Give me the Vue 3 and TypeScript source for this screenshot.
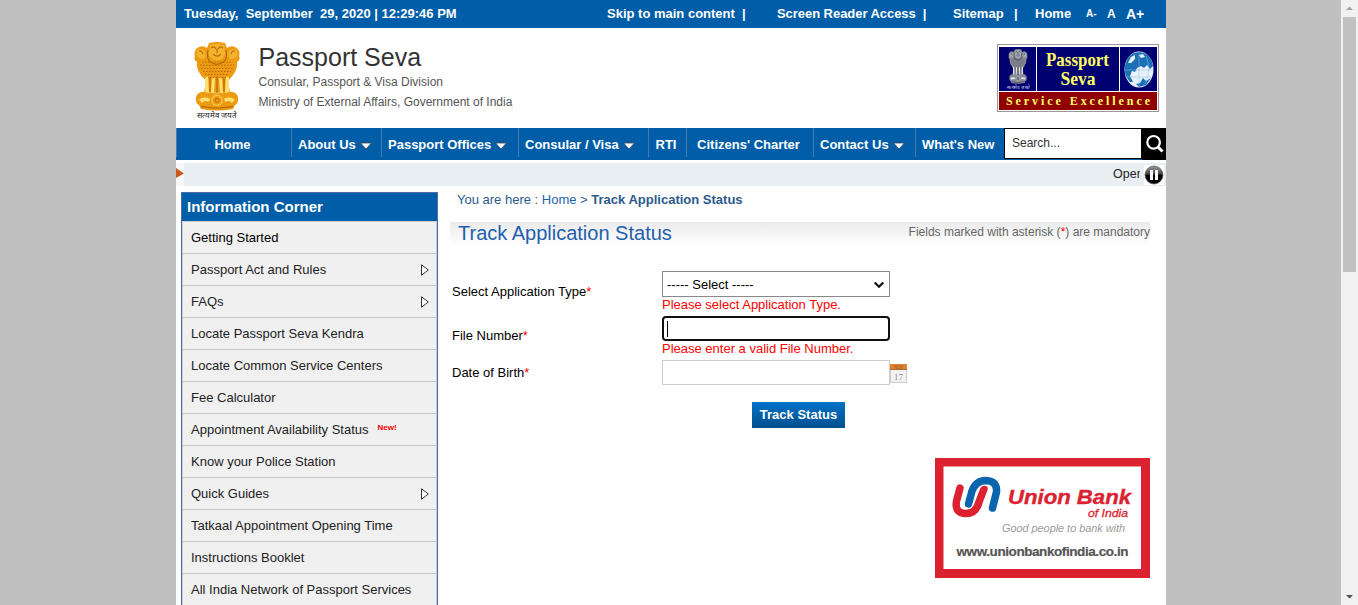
<script setup lang="ts">
import { ref } from 'vue'

interface NavItem { label: string; width: number; menu?: boolean; center?: boolean }
interface SideItem { label: string; sub?: boolean; isNew?: boolean; active?: boolean }

const nav: NavItem[] = [
  { label: 'Home', width: 115, center: true },
  { label: 'About Us', width: 90, menu: true },
  { label: 'Passport Offices', width: 137, menu: true },
  { label: 'Consular / Visa', width: 130, menu: true },
  { label: 'RTI', width: 38, center: true },
  { label: "Citizens' Charter", width: 127, center: true },
  { label: 'Contact Us', width: 102, menu: true },
  { label: "What's New", width: 89 },
]

const side: SideItem[] = [
  { label: 'Getting Started', active: true },
  { label: 'Passport Act and Rules', sub: true },
  { label: 'FAQs', sub: true },
  { label: 'Locate Passport Seva Kendra' },
  { label: 'Locate Common Service Centers' },
  { label: 'Fee Calculator' },
  { label: 'Appointment Availability Status', isNew: true },
  { label: 'Know your Police Station' },
  { label: 'Quick Guides', sub: true },
  { label: 'Tatkaal Appointment Opening Time' },
  { label: 'Instructions Booklet' },
  { label: 'All India Network of Passport Services' },
]

const dob = ref('')
</script>

<template>
  <div class="screen">
    <svg class="defs" width="0" height="0" aria-hidden="true">
      <symbol id="emblem" viewBox="0 0 48 68" preserveAspectRatio="none">
        <path class="e1" d="M16 1 Q24 -1 32 1 L34 6 Q38 3 42 5 Q48 8 46 14 Q48 17 44 20 Q45 27 39 34 L35 38 L37 50 H11 L13 38 L9 34 Q3 27 4 20 Q0 17 2 14 Q0 8 6 5 Q10 3 14 6 Z" />
        <path class="e2" d="M17 3 Q24 1 31 3 L32 12 Q30 18 24 18 Q18 18 16 12 Z M4 8 Q9 5 13 10 L12 16 Q7 18 4 14 Z M44 8 Q39 5 35 10 L36 16 Q41 18 44 14 Z" />
        <path class="l1" d="M18 6 Q21 3 23 7 M30 6 Q27 3 25 7 M20 12 Q24 16 28 12 M24 7 V11 M6 9 Q9 8 10 12 M42 9 Q39 8 38 12 M15 8 Q13 17 18 20 Q24 24 30 20 Q35 17 33 8" />
        <path class="dots" d="M9 20 H39 M7 23 H41 M8 26 H40 M10 29 H38 M12 32 H36 M14 35 H34" />
        <path class="e3" d="M12 35 L15 34 L16 50 H12 Z M19 36 L22 35 L21 50 H18 Z M26 35 L29 36 L30 50 H27 Z M33 34 L36 35 L36 50 H32 Z" />
        <path class="l1" d="M17 35 L17 49 M24 34 L24 50 M31 35 L31 49" />
        <path class="e1" d="M9 49 Q24 52 39 49 Q46 51 45 57 Q45 61 42 62 L40 66 Q24 69 8 66 L6 62 Q3 61 3 57 Q2 51 9 49 Z" />
        <circle class="ring" cx="24" cy="57.5" r="5" />
        <circle class="hub" cx="24" cy="57.5" r="2" />
        <path class="e3" d="M6 57 Q10 53 17 56 L16 59 Q11 57 9 60 Z M42 57 Q38 53 31 56 L32 59 Q37 57 39 60 Z" />
        <path class="l1" d="M8 63.500 Q24 67 40 63.500" />
      </symbol>
    </svg>

    <div class="page">
      <div class="topbar">
        <span class="date">Tuesday,&nbsp; September&nbsp; 29, 2020 | 12:29:46 PM</span>
        <span class="t-skip">Skip to main content&nbsp; |</span>
        <span class="t-reader">Screen Reader Access&nbsp; |</span>
        <span class="t-map">Sitemap</span>
        <span class="t-bar">|</span>
        <span class="t-home">Home</span>
        <span class="t-small">A-</span>
        <span class="t-mid">A</span>
        <span class="t-big">A+</span>
      </div>

      <header class="head">
        <div class="crest">
          <svg class="gold" width="48" height="69"><use href="#emblem" /></svg>
          <span class="motto">सत्यमेव जयते</span>
        </div>
        <div class="title">
          <h1>Passport Seva</h1>
          <p class="p1">Consular, Passport &amp; Visa Division</p>
          <p class="p2">Ministry of External Affairs, Government of India</p>
        </div>
        <svg class="logo" width="162" height="69" viewBox="0 0 162 69">
          <rect x=".5" y=".5" width="161" height="67" fill="#fff" stroke="#999" />
          <rect x="2" y="3" width="37" height="44" fill="#000070" />
          <rect x="40" y="3" width="82" height="44" fill="#000070" />
          <rect x="123" y="3" width="37" height="44" fill="#000070" />
          <rect x="2" y="48" width="158" height="18" fill="#900000" />
          <svg class="silver" x="11" y="5" width="20" height="35"><use href="#emblem" /></svg>
          <text x="10" y="45" font-size="5" textLength="23" lengthAdjust="spacingAndGlyphs" fill="#dde">सत्यमेव जयते</text>
          <g class="serif" fill="#ffff66" font-weight="bold">
            <text x="49" y="22" font-size="19.500" textLength="63" lengthAdjust="spacingAndGlyphs">Passport</text>
            <text x="63.500" y="41" font-size="19.500" textLength="35" lengthAdjust="spacingAndGlyphs">Seva</text>
            <text x="9" y="61" font-size="12" textLength="144">Service Excellence</text>
          </g>
          <ellipse cx="142" cy="25.500" rx="14.500" ry="18" fill="#e8f2fa" />
          <path fill="#1b6fb5" d="M128 22 Q130 9 142 8 Q154 9 156 22 L153 25 L150 21 L147 24 L144 22 L140 24 L138 28 L135 27 L133 32 L136 38 L133 38 Q126 30 128 22 Z M146 34 L149 37 L154 34 L149 41 L142 43 L139 40 L143 39 Z" />
          <path fill="#e8f2fa" d="M134 13 L138 11 L138 15 L134 19 L131 19 Z M142 11 L146 10 L148 13 L144 14 Z" />
          <path fill="none" stroke="#8fbadf" stroke-width=".5" d="M128 26 H156 M130 33 H154 M142 8 V43 M149 12 Q155 26 148 40" />
        </svg>
      </header>

      <nav class="nav">
        <a v-for="n in nav" :key="n.label" :class="{ center: n.center }" :style="{ width: n.width + 'px' }">
          <span>{{ n.label }}</span>
          <svg v-if="n.menu" width="12" height="8" viewBox="0 0 12 8"><path d="M.6 1 H11.400 L6 7 Z" fill="#fff" stroke="#3c4650" stroke-width=".8" /></svg>
        </a>
        <div class="search">
          <div class="box">Search...</div>
          <div class="go">
            <svg width="20" height="20" viewBox="0 0 20 20" fill="none" stroke="#fff"><circle cx="8.600" cy="8.300" r="6.300" stroke-width="2.200" /><path d="M13 13 L17.500 17.500" stroke-width="3" /></svg>
          </div>
        </div>
      </nav>

      <div class="ticker">
        <svg class="mark" width="8" height="23" viewBox="0 0 8 23"><path d="M0 5 L8 10.500 L0 15 Z" fill="#c55a1c" /></svg>
        <div class="run"><span>Open</span></div>
        <svg class="pause" width="20" height="20" viewBox="0 0 20 20">
          <defs><linearGradient id="pg" x2="0" y2="1"><stop offset="0" stop-color="#999" /><stop offset=".45" stop-color="#444" /><stop offset=".5" stop-color="#000" /></linearGradient></defs>
          <rect width="20" height="20" fill="#fff" /><circle cx="10" cy="10" r="9" fill="url(#pg)" stroke="#555" stroke-width=".7" />
          <path d="M6 5 H9 V15 H6 Z M11 5 H14 V15 H11 Z" fill="#fff" />
        </svg>
      </div>

      <div class="body">
        <aside class="side">
          <h2>Information Corner</h2>
          <ul>
            <li v-for="s in side" :key="s.label" :class="{ active: s.active }">
              <span>{{ s.label }}</span>
              <b v-if="s.isNew">New!</b>
              <svg v-if="s.sub" width="8" height="12" viewBox="0 0 8 12"><path d="M.5 .7 L7.300 6 L.5 11.300 Z" fill="#fff" stroke="#333" /></svg>
            </li>
          </ul>
        </aside>

        <main class="main">
          <div class="crumbs"><span>You are here : <a>Home</a> &gt; </span><strong>Track Application Status</strong></div>
          <div class="heading">
            <h3>Track Application Status</h3>
            <span class="note">Fields marked with asterisk (<i>*</i>) are mandatory</span>
          </div>
          <div class="form">
            <label class="r1">Select Application Type<i>*</i></label>
            <div class="field">
              <div class="select"><span>----- Select -----</span>
                <svg width="12" height="8" viewBox="0 0 12 8"><path d="M1.700 1.500 L6 5.800 L10.300 1.500" fill="none" stroke="#111" stroke-width="2.200" /></svg>
              </div>
              <p class="err">Please select Application Type.</p>
            </div>
            <label class="r2">File Number<i>*</i></label>
            <div class="field">
              <div class="input focus"><span class="caret"></span></div>
              <p class="err">Please enter a valid File Number.</p>
            </div>
            <label class="r3">Date of Birth<i>*</i></label>
            <div class="field date-row">
              <input v-model="dob" class="input" type="text">
              <svg width="18" height="19" viewBox="0 0 18 19">
                <rect x=".5" y="5" width="16" height="13.500" fill="#f2f2f2" stroke="#ccc" />
                <rect width="17" height="6" fill="#e0812f" /><rect y="5" width="17" height="1" fill="#aa6d3c" />
                <text x="4" y="4.500" font-size="4.500" textLength="9" lengthAdjust="spacingAndGlyphs" fill="#8c5a35">NOV</text>
                <text x="4" y="15.500" class="serif" font-size="8.500" textLength="9" fill="#888">17</text>
              </svg>
            </div>
          </div>
          <button class="track" type="button">Track Status</button>
          <svg class="bank" width="215" height="120" viewBox="0 0 215 120">
            <rect width="215" height="120" fill="#dc2230" /><rect x="8.500" y="8.500" width="197.500" height="102.500" fill="#fff" />
            <g fill="none" stroke-linecap="round" stroke-width="7.500">
              <path stroke="#dc2230" d="M25 30 L21.500 43 Q19.500 55 30 55.500 Q41 56 44 44 L49 31" />
              <path stroke="#fff" stroke-width="10" d="M33 46 L37 33 Q41 22.500 51 22.500 Q62.500 23 61.500 34 L57.500 50" />
              <path stroke="#0b65ae" d="M33.500 46 L37 33 Q41 22.500 51 22.500 Q62.500 23 61.500 34 L57.500 50" />
            </g>
            <g class="sans">
              <text x="73" y="45.500" font-size="21" font-weight="bold" font-style="italic" fill="#dc2230" stroke="#dc2230" stroke-width=".4" textLength="123" lengthAdjust="spacingAndGlyphs">Union Bank</text>
              <text x="153" y="59" font-size="11.500" font-style="italic" fill="#dc2230" stroke="#dc2230" stroke-width=".3" textLength="40" lengthAdjust="spacingAndGlyphs">of India</text>
              <text x="67" y="73.500" font-size="10.500" font-style="italic" fill="#999" textLength="123" lengthAdjust="spacingAndGlyphs">Good people to bank with</text>
              <text x="21.500" y="98" font-size="13.500" font-weight="bold" fill="#555" stroke="#555" stroke-width=".2" textLength="172" lengthAdjust="spacing">www.unionbankofindia.co.in</text>
            </g>
          </svg>
        </main>
      </div>
    </div>

    <div class="scrollbar">
      <svg width="17" height="17" viewBox="0 0 17 17"><path d="M5 10 L8.500 6.500 L12 10 Z" fill="#a3a3a3" /></svg>
      <div class="thumb"></div>
      <svg class="down" width="17" height="17" viewBox="0 0 17 17"><path d="M5 7 L8.500 10.500 L12 7 Z" fill="#505050" /></svg>
    </div>
  </div>
</template>

<style>
html, body { margin: 0; overflow: hidden; }
</style>

<style scoped>
* { box-sizing: border-box; }
h1, h2, h3, p, ul { margin: 0; padding: 0; font-weight: normal; }
i { font-style: normal; color: #f00; }
svg { display: block; flex: none; }
.defs { position: absolute; }
.sans { font-family: "Liberation Sans", Arial, sans-serif; }
.screen { display: flex; width: 1358px; height: 605px; overflow: hidden; background: #c0c0c0; font: 13px/16px "Liberation Sans", Arial, sans-serif; color: #000; white-space: nowrap; }
.page { width: 990px; margin: 0 175px 0 176px; background: #fff; flex: none; }
.topbar { display: flex; height: 28px; background: #005ea8; color: #fff; font-weight: bold; font-size: 13px; line-height: 27px; padding-left: 8px; }
.topbar span { flex: none; }
.date { width: 423px; }
.t-skip { width: 170px; }
.t-reader { width: 176px; letter-spacing: -0.05px; }
.t-map { width: 61px; }
.t-bar { width: 21px; }
.t-home { width: 51px; }
.t-small { width: 21px; font-size: 10px; line-height: 28px; }
.t-mid { width: 19px; font-size: 12px; line-height: 28px; }
.t-big { font-size: 14px; line-height: 28px; }

.head { display: flex; height: 100px; }
.crest { width: 48px; margin: 14px 0 0 17px; }
.gold { --a: #eb9a12; --b: #f4b32c; --c: #ffe070; --d: #b86b05; }
.silver { --a: #888b95; --b: #a5a8ae; --c: #e6e6e6; --d: #34364a; }
.e1 { fill: var(--a); }
.e2 { fill: var(--b); }
.e3 { fill: var(--c); }
.l1 { fill: none; stroke: var(--d); stroke-width: 1.2; }
.ring { fill: none; stroke: var(--c); stroke-width: 1.2; stroke-dasharray: 1.2 .6; }
.hub { fill: none; stroke: var(--d); stroke-width: .9; }
.dots { fill: none; stroke: var(--d); stroke-width: 1; stroke-dasharray: 1.5 1.5; }
.motto { display: block; font-size: 8px; line-height: 10px; text-align: center; color: #222; }
.title { margin-left: 17.500px; padding-top: 14px; color: #555; font-size: 12px; }
.title h1 { font-size: 25px; line-height: 31px; color: #333; }
.p1 { line-height: 18px; }
.p2 { line-height: 22px; }
.logo { margin: 16px 7px 0 auto; }
.serif { font-family: "Liberation Serif", "Times New Roman", serif; }

.nav { display: flex; height: 32px; background: #005ea8; color: #fff; font-weight: bold; font-size: 13px; }
.nav a { flex: none; display: flex; align-items: center; height: 29px; padding: 4px 0 0 6px; border-left: 1px solid #4a78ab; }
.nav a.center { justify-content: center; padding: 4px 3px 0 0; }
.nav svg { margin: 2px 0 0 4px; }
.search { display: flex; width: 162px; }
.box { width: 138px; height: 31px; border: 1px solid #000; background: #fff; color: #333; font-weight: normal; font-size: 12px; line-height: 28px; padding-left: 7px; }
.go { width: 24px; background: #000; }
.nav .go svg { margin: 6px 0 0 3px; }

.ticker { display: flex; margin-top: 3px; height: 23px; background: #e9eef2; }
.mark { background: #f7f7f7; }
.run { display: flex; width: 956px; overflow: hidden; padding-left: 929px; line-height: 22px; color: #222; }
.run span { width: 26.500px; overflow: hidden; flex: none; font-size: 12.500px; }
.pause { margin: 2px 0 0 4px; }

.body { display: flex; padding: 6px 0 0 5px; align-items: flex-start; }
.side { width: 257px; border: 1px solid #4a6ca8; height: 430px; overflow: hidden; flex: none; }
.side h2 { height: 28px; background: #005ea8; color: #fff; font-weight: bold; font-size: 15px; line-height: 27px; padding-left: 5px; }
.side ul { list-style: none; border: 1px solid #ccc; background: #f0f0f0; }
.side li { display: flex; height: 32px; padding: 8px 7px 0 8px; border-bottom: 1px solid #c6c6c6; color: #222; }
.side li.active { color: #000; }
.side li svg { margin: 2px 0 0 auto; }
.side li b { font-size: 8px; line-height: 12px; color: #f00; margin-left: 9px; }

.main { width: 700px; margin-left: 12px; }
.crumbs { height: 30px; padding-left: 7px; line-height: 15px; color: #2c5a8c; white-space: pre; }
.crumbs a { color: #1f5fae; }
.heading { display: flex; justify-content: space-between; height: 24px; background: linear-gradient(#ebebeb, #fff); }
.heading h3 { font-size: 20px; line-height: 22px; padding-left: 8px; color: #1f5fae; }
.note { font-size: 12px; line-height: 20px; color: #666; }
.form { display: grid; grid-template-columns: 210px 1fr; grid-template-rows: 45px 44px 26px; margin: 25px 0 0 2px; }
.form label { line-height: 16px; }
.r1 { padding-top: 13px; }
.r2 { padding-top: 12px; }
.r3 { padding-top: 5px; }
.select { display: flex; justify-content: space-between; align-items: center; width: 228px; height: 26px; border: 1px solid #888; padding: 1px 4px 0; }
.err { color: #f00; line-height: 16px; }
.input { display: block; width: 228px; height: 25px; border: 1px solid #ccc; background: #fff; outline: 0; }
.focus { border: 2px solid #101010; border-radius: 4px; padding: 3px; }
.caret { display: block; width: 1px; height: 16px; background: #000; }
.date-row { display: flex; }
.date-row svg { margin-top: 4px; }
.track { display: block; width: 93px; height: 26px; margin: 16px 0 0 302px; padding: 0 0 1px; border: 0; background: linear-gradient(#0072c6, #004f8f); color: #fff; font: bold 13px/24px "Liberation Sans", Arial, sans-serif; }
.bank { margin: 30px 0 0 485px; }

.scrollbar { width: 17px; background: #f1f1f1; flex: none; display: flex; flex-direction: column; }
.thumb { width: 13px; height: 255px; margin-left: 2px; background: #c1c1c1; }
.down { margin-top: auto; }
</style>
